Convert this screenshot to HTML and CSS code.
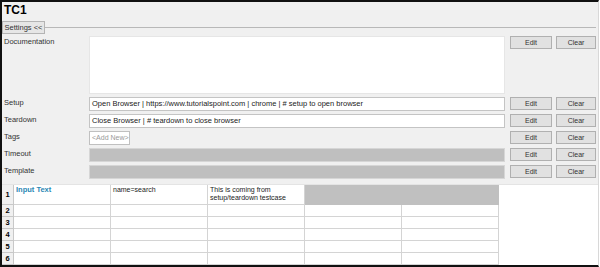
FILE: index.html
```html
<!DOCTYPE html>
<html lang="en">
<head>
    <meta charset="UTF-8">
    <title>TC1</title>
    <link rel="stylesheet" href="styles.css">
</head>
<body>
    <div class="frame">
        <div class="title">TC1</div>

        <div class="settings-row">
            <button class="settings-btn">Settings &lt;&lt;</button>
            <div class="rule"></div>
        </div>

        <div class="settings">
            <div class="label">Documentation</div>
            <div class="field doc"></div>
            <div class="actions"><button class="btn edit">Edit</button><button class="btn">Clear</button></div>

            <div class="label">Setup</div>
            <div class="field">Open Browser | https://www.tutorialspoint.com | chrome | # setup to open browser</div>
            <div class="actions"><button class="btn edit">Edit</button><button class="btn">Clear</button></div>

            <div class="label">Teardown</div>
            <div class="field">Close Browser | # teardown to close browser</div>
            <div class="actions"><button class="btn edit">Edit</button><button class="btn">Clear</button></div>

            <div class="label">Tags</div>
            <div class="tags"><span class="add-new">&lt;Add New&gt;</span></div>
            <div class="actions"><button class="btn edit">Edit</button><button class="btn">Clear</button></div>

            <div class="label">Timeout</div>
            <div class="field disabled"></div>
            <div class="actions"><button class="btn edit">Edit</button><button class="btn">Clear</button></div>

            <div class="label">Template</div>
            <div class="field disabled"></div>
            <div class="actions"><button class="btn edit">Edit</button><button class="btn">Clear</button></div>
        </div>

        <!-- Test steps grid -->
        <div class="grid-area">
            <table class="steps">
                <tr class="first">
                    <th>1</th>
                    <td class="keyword">Input Text</td>
                    <td>name=search</td>
                    <td>This is coming from<br>setup/teardown testcase</td>
                    <td class="empty"></td>
                    <td class="empty"></td>
                </tr>
                <tr><th>2</th><td></td><td></td><td></td><td></td><td></td></tr>
                <tr><th>3</th><td></td><td></td><td></td><td></td><td></td></tr>
                <tr><th>4</th><td></td><td></td><td></td><td></td><td></td></tr>
                <tr><th>5</th><td></td><td></td><td></td><td></td><td></td></tr>
                <tr><th>6</th><td></td><td></td><td></td><td></td><td></td></tr>
            </table>
        </div>
    </div>
</body>
</html>
```

FILE: styles.css
```css
html, body {
    margin: 0;
    padding: 0;
    background-color: #fff;
}
body {
    font-family: "Liberation Sans", Arial, sans-serif;
    font-size: 8px;
    color: #222;
}
.frame {
    width: 596px;
    height: 263px;
    border: 2px solid #111;
    border-right: 1px solid #d8d8d8;
    background-color: #f0f0f0;
    display: flex;
    flex-direction: column;
    overflow: hidden;
}
.title {
    font-size: 12px;
    font-weight: bold;
    color: #000;
    padding: 1px 0 0 2px;
    height: 16px;
    line-height: 14px;
}
.settings-row {
    display: flex;
    align-items: center;
    height: 13px;
    margin-top: 4px;
}
.settings-btn {
    width: 43px;
    height: 13px;
    padding: 0;
    font-family: inherit;
    font-size: 7.5px;
    color: #333;
    background-color: #e6e6e6;
    border: 1px solid #b4b4b4;
}
.rule {
    flex: 1;
    height: 0;
    border-top: 1px solid #b8b8b8;
    margin-right: 2px;
}
.settings {
    display: grid;
    grid-template-columns: 85px 416px 92px;
    grid-template-rows: 58px 14px 14px 14px 14px 14px;
    row-gap: 3px;
    margin-top: 2px;
    padding-left: 2px;
}
.label {
    font-size: 7.5px;
    color: #333;
    padding-top: 1px;
}
.field {
    background-color: #fff;
    border: 1px solid #c4c4c4;
    padding: 0 2px;
    line-height: 12px;
    font-size: 7.5px;
    color: #222;
    white-space: nowrap;
    overflow: hidden;
}
.field.doc {
    border-color: #e6e6e6;
}
.field.disabled {
    background-color: #bfbfbf;
    border-color: #d6d6d6;
}
.tags {
    display: flex;
}
.add-new {
    width: 37px;
    height: 12px;
    line-height: 12px;
    padding-left: 2px;
    background-color: #fff;
    border: 1px solid #c0c0c0;
    color: #999;
    font-size: 7px;
    white-space: nowrap;
    overflow: hidden;
}
.actions {
    display: flex;
    gap: 4px;
    padding-left: 5px;
    align-items: flex-start;
}
.btn {
    width: 40px;
    height: 13px;
    padding: 0;
    font-family: inherit;
    font-size: 7px;
    color: #333;
    background-color: #e1e1e1;
    border: 1px solid #b0b0b0;
}
.btn.edit {
    width: 42px;
}
.grid-area {
    flex: 1;
    margin-top: 5px;
    background-color: #fff;
    border-top: 1px solid #e4e4e4;
    display: flex;
    align-items: flex-start;
}
.steps {
    border-collapse: collapse;
    table-layout: fixed;
    border-right: 1px solid #c8c8c8;
}
.steps th {
    width: 11px;
    height: 11px;
    padding: 0;
    font-size: 7.5px;
    line-height: 10px;
    font-weight: bold;
    color: #000;
    background-color: #f0f0f0;
    border-bottom: 1px solid #c8c8c8;
    border-right: 1px solid #c8c8c8;
    text-align: center;
}
.steps td {
    width: 92px;
    height: 11px;
    padding: 0 2px;
    border: 1px solid #d4d4d4;
    border-top: none;
    font-size: 7px;
    line-height: 8px;
    vertical-align: top;
    color: #222;
}
.steps tr.first td,
.steps tr.first th {
    height: 18px;
}
.steps tr.first td {
    padding-top: 1px;
}
.steps td.keyword {
    color: #2a87b5;
    font-weight: bold;
    font-size: 7.5px;
}
.steps td.empty {
    background-color: #c0c0c0;
    border-color: #c0c0c0;
}
```
